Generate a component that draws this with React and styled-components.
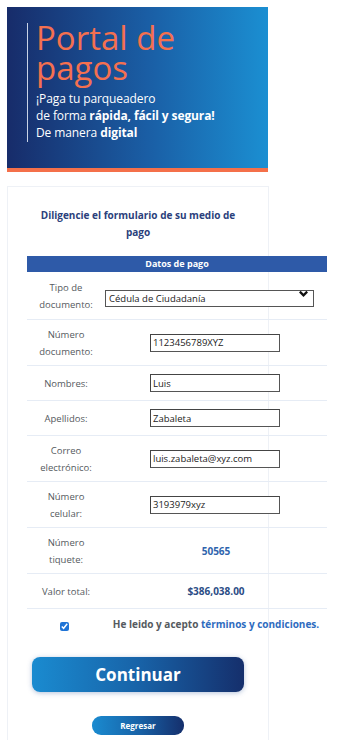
import React from "react"
import styled, { createGlobalStyle } from "styled-components"

const GlobalStyle = createGlobalStyle`
	body {
		margin: 0;
		background: #ffffff;
		font-family: "Open Sans", "Liberation Sans", sans-serif;
	}
`

const rows = [
	{ label: ["Número", "documento:"], value: "1123456789XYZ", kind: "input", tall: true },
	{ label: ["Nombres:"], value: "Luis", kind: "input" },
	{ label: ["Apellidos:"], value: "Zabaleta", kind: "input" },
	{ label: ["Correo", "electrónico:"], value: "luis.zabaleta@xyz.com", kind: "input", tall: true },
	{ label: ["Número", "celular:"], value: "3193979xyz", kind: "input", tall: true },
	{ label: ["Número", "tiquete:"], value: "50565", kind: "text", tall: true },
	{ label: ["Valor total:"], value: "$386,038.00", kind: "total" },
]

const App = () => {
	return (
		<Page>
			<GlobalStyle />
			<Banner>
				<BannerInner>
					<Title>Portal de pagos</Title>
					<Subtitle>
						¡Paga tu parqueadero
						<br />
						de forma <b>rápida, fácil y segura!</b>
						<br />
						De manera <b>digital</b>
					</Subtitle>
				</BannerInner>
			</Banner>

			<Card>
				<Intro>Diligencie el formulario de su medio de pago</Intro>
				<Table>
					<Header>Datos de pago</Header>
					<Row $h="48px">
						<Label>
							Tipo de
							<br />
							documento:
						</Label>
						<Cell>
							<SelectWrap>
								<Select defaultValue="cc">
									<option value="cc">Cédula de Ciudadanía</option>
								</Select>
								<Chevron viewBox="0 0 24 24">
									<path d="M4 8 L12 16 L20 8" />
								</Chevron>
							</SelectWrap>
						</Cell>
					</Row>
					{rows.map((r) => (
						<Row key={r.value} $h={r.tall ? "46px" : "35px"}>
							<Label>
								{r.label.map((l, i) => (
									<React.Fragment key={l}>
										{i > 0 && <br />}
										{l}
									</React.Fragment>
								))}
							</Label>
							<Cell>
								{r.kind === "input" && <Input defaultValue={r.value} />}
								{r.kind === "text" && <Value>{r.value}</Value>}
								{r.kind === "total" && <Value $dark>{r.value}</Value>}
							</Cell>
						</Row>
					))}
					<CheckRow>
						<CheckCell>
							<Check type="checkbox" defaultChecked />
						</CheckCell>
						<Terms>
							He leido y acepto <a>términos y condiciones.</a>
						</Terms>
					</CheckRow>
				</Table>
				<Actions>
					<MainButton>Continuar</MainButton>
					<BackButton>Regresar</BackButton>
				</Actions>
			</Card>
		</Page>
	)
}

export default App

const Page = styled.div`
	padding: 7px 0 0 7px;
	width: 340px;
	box-sizing: border-box;
`

const Banner = styled.div`
	width: 261px;
	height: 165px;
	box-sizing: border-box;
	background: linear-gradient(90deg, #172c6a 0%, #1a5fa6 55%, #1b8fd2 100%);
	border-bottom: 4px solid #f4704a;
	padding: 19px 0 0 20px;
`

const BannerInner = styled.div`
	border-left: 1px solid #c9d3e6;
	padding-left: 8px;
	height: 119px;
	box-sizing: border-box;
`

const Title = styled.h1`
	margin: -3px 0 0;
	width: 170px;
	font-size: 33px;
	line-height: 30px;
	font-weight: 500;
	color: #f47050;
	letter-spacing: 0;
`

const Subtitle = styled.p`
	margin: 7px 0 0;
	font-size: 12px;
	line-height: 17px;
	color: #ffffff;
	letter-spacing: -0.1px;
	white-space: nowrap;
	b {
		font-weight: 700;
	}
`

const Card = styled.div`
	margin-top: 14px;
	width: 262px;
	min-height: 560px;
	box-sizing: border-box;
	border: 1px solid #eef1f6;
	border-bottom: none;
	padding-top: 20px;
`

const Intro = styled.h2`
	margin: 0 auto;
	width: 210px;
	text-align: center;
	font-size: 10px;
	line-height: 17px;
	font-weight: 700;
	color: #2b3f7c;
`

const Table = styled.div`
	margin: 15px 0 0 19px;
	width: 300px;
`

const Header = styled.div`
	height: 16px;
	background: #2e5aa8;
	color: #ffffff;
	font-size: 9px;
	font-weight: 700;
	line-height: 16px;
	text-align: center;
`

const Row = styled.div`
	display: grid;
	grid-template-columns: 78px 1fr;
	align-items: center;
	height: ${(p) => p.$h};
	border-bottom: 1px solid #e6ecf5;
	box-sizing: border-box;
`

const Label = styled.div`
	text-align: center;
	font-size: 9.5px;
	line-height: 17px;
	color: #555a60;
`

const Cell = styled.div`
	display: flex;
	justify-content: center;
`

const SelectWrap = styled.div`
	position: relative;
	margin-left: -13px;
	width: 209px;
`

const Select = styled.select`
	appearance: none;
	width: 100%;
	height: 17px;
	box-sizing: border-box;
	border: 1px solid #555;
	border-radius: 0;
	background: #fff;
	font-family: inherit;
	font-size: 9.5px;
	color: #222;
	padding: 0 0 0 3px;
	margin: 0;
	outline: none;
`

const Chevron = styled.svg`
	position: absolute;
	right: 5px;
	top: 3px;
	width: 11px;
	height: 11px;
	fill: none;
	stroke: #111;
	stroke-width: 5;
	pointer-events: none;
`

const Input = styled.input`
	width: 130px;
	height: 18px;
	box-sizing: border-box;
	border: 1px solid #555;
	border-top-color: #444;
	border-left-color: #444;
	font-family: inherit;
	font-size: 9.5px;
	color: #222;
	padding: 0 2px;
	margin: 0 2px 0 0;
	outline: none;
`

const Value = styled.span`
	font-size: 10px;
	font-weight: 700;
	color: ${(p) => (p.$dark ? "#2c4d86" : "#2e64ad")};
`

const CheckRow = styled.div`
	display: grid;
	grid-template-columns: 78px 1fr;
	align-items: center;
	height: 30px;
`

const CheckCell = styled.div`
	display: flex;
	justify-content: center;
	padding-right: 4px;
`

const Check = styled.input`
	margin: 4px 0 0;
	width: 9px;
	height: 9px;
	accent-color: #1f74d6;
`

const Terms = styled.div`
	text-align: center;
	font-size: 10px;
	font-weight: 700;
	color: #555a60;
	white-space: nowrap;
	padding-left: 0;
	a {
		color: #2e6cc0;
	}
`

const Actions = styled.div`
	display: flex;
	flex-direction: column;
	align-items: center;
	padding-top: 18px;
`

const MainButton = styled.button`
	width: 212px;
	height: 35px;
	border: none;
	border-radius: 8px;
	background: linear-gradient(90deg, #1a8bd0 0%, #1863a8 50%, #152f6c 100%);
	box-shadow: 0 1px 5px rgba(40, 80, 150, 0.35);
	color: #fff;
	font-family: inherit;
	font-size: 17px;
	font-weight: 700;
	cursor: pointer;
`

const BackButton = styled.button`
	margin-top: 24px;
	width: 92px;
	height: 19px;
	border: none;
	border-radius: 9px;
	background: linear-gradient(90deg, #1a8bd0 0%, #1863a8 50%, #152f6c 100%);
	color: #fff;
	font-family: inherit;
	font-size: 8px;
	font-weight: 700;
	cursor: pointer;
	padding: 0;
`
